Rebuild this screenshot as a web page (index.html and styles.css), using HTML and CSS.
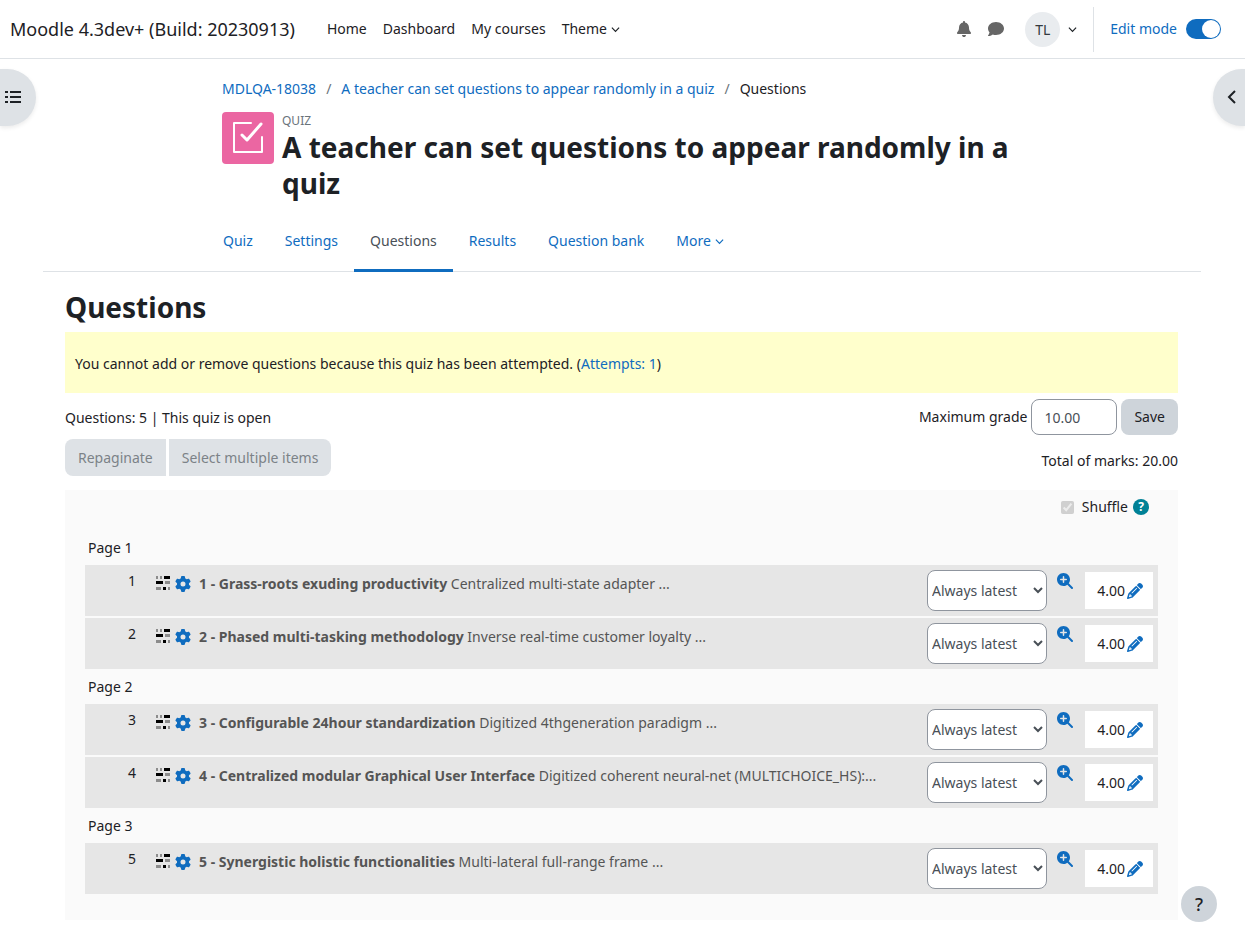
FILE: index.html
```html
<!DOCTYPE html>
<html lang="en">
<head>
    <meta charset="UTF-8">
    <meta name="viewport" content="width=device-width, initial-scale=1.0">
    <title>Questions | Moodle</title>
    <link rel="stylesheet" href="styles.css">
</head>
<body>
    <!-- Icon set -->
    <svg class="icon-set" aria-hidden="true">
        <symbol id="bell" viewBox="0 0 448 512"><path d="M224 0c-17.700 0-32 14.300-32 32l0 19.200C119 66 64 130.600 64 208l0 18.800c0 47-17.300 92.400-48.500 127.600l-7.400 8.300c-8.400 9.400-10.400 22.900-5.300 34.400S19.400 416 32 416l384 0c12.600 0 24-7.400 29.200-18.900s3.100-25-5.300-34.400l-7.400-8.300C401.300 319.200 384 273.900 384 226.800l0-18.800c0-77.400-55-142-128-156.800L256 32c0-17.700-14.300-32-32-32zm45.300 493.300c12-12 18.700-28.300 18.700-45.300l-64 0-64 0c0 17 6.700 33.300 18.700 45.300s28.300 18.700 45.300 18.700s33.300-6.700 45.300-18.700z"/></symbol>
        <symbol id="comment" viewBox="0 0 512 512"><path d="M512 240c0 114.900-114.600 208-256 208c-37.100 0-72.300-6.400-104.100-17.900c-11.900 8.700-31.300 20.600-54.300 30.600C73.600 471.100 44.700 480 16 480c-6.500 0-12.300-3.900-14.800-9.900c-2.500-6-1.100-12.800 3.400-17.400l.3-.3c.3-.3 .7-.7 1.300-1.400c1.100-1.200 2.800-3.100 4.900-5.700c4.100-5 9.600-12.400 15.200-21.600c10-16.600 19.500-38.400 21.400-62.900C17.700 326.800 0 285.100 0 240C0 125.100 114.600 32 256 32s256 93.100 256 208z"/></symbol>
        <symbol id="chevron" viewBox="0 0 10 10"><path d="M1 3l4 4 4-4" fill="none" stroke="currentColor" stroke-width="1.300"/></symbol>
        <symbol id="gear" viewBox="0 0 512 512"><path d="M495.900 166.600c3.200 8.700 .5 18.400-6.400 24.600l-43.300 39.400c1.100 8.300 1.700 16.800 1.700 25.400s-.6 17.100-1.700 25.400l43.300 39.400c6.900 6.200 9.600 15.900 6.400 24.600c-4.400 11.900-9.700 23.300-15.800 34.300l-4.700 8.100c-6.600 11-14 21.400-22.100 31.200c-5.900 7.200-15.700 9.600-24.500 6.800l-55.700-17.700c-13.400 10.300-28.200 18.900-44 25.400l-12.500 57.100c-2 9.100-9 16.300-18.200 17.800c-13.800 2.300-28 3.500-42.500 3.500s-28.700-1.200-42.500-3.500c-9.200-1.500-16.200-8.700-18.200-17.800l-12.500-57.100c-15.800-6.500-30.600-15.100-44-25.400L83.100 425.900c-8.800 2.800-18.600 .3-24.500-6.800c-8.100-9.800-15.500-20.200-22.100-31.200l-4.700-8.100c-6.100-11-11.400-22.400-15.800-34.300c-3.200-8.700-.5-18.400 6.400-24.600l43.300-39.400C64.600 273.100 64 264.600 64 256s.6-17.100 1.700-25.400L22.400 191.200c-6.900-6.200-9.600-15.900-6.400-24.600c4.400-11.900 9.700-23.300 15.800-34.300l4.700-8.100c6.600-11 14-21.400 22.100-31.200c5.900-7.200 15.700-9.600 24.500-6.800l55.700 17.700c13.400-10.300 28.200-18.900 44-25.400l12.500-57.100c2-9.100 9-16.300 18.200-17.800C227.300 1.200 241.500 0 256 0s28.700 1.200 42.500 3.500c9.200 1.500 16.200 8.700 18.200 17.800l12.500 57.100c15.800 6.500 30.600 15.100 44 25.400l55.700-17.700c8.800-2.800 18.600-.3 24.500 6.800c8.100 9.800 15.500 20.200 22.100 31.200l4.700 8.100c6.100 11 11.400 22.400 15.800 34.300zM256 336a80 80 0 1 0 0-160 80 80 0 1 0 0 160z"/></symbol>
        <symbol id="preview" viewBox="0 0 512 512"><path d="M416 208c0 45.900-14.900 88.300-40 122.700L502.600 457.400c12.500 12.500 12.500 32.800 0 45.300s-32.800 12.500-45.300 0L330.700 376c-34.400 25.200-76.800 40-122.700 40C93.100 416 0 322.900 0 208S93.100 0 208 0S416 93.100 416 208zM184 296c0 13.300 10.700 24 24 24s24-10.700 24-24l0-64 64 0c13.300 0 24-10.700 24-24s-10.700-24-24-24l-64 0 0-64c0-13.300-10.700-24-24-24s-24 10.700-24 24l0 64-64 0c-13.300 0-24 10.700-24 24s10.700 24 24 24l64 0 0 64z"/></symbol>
        <symbol id="pencil" viewBox="0 0 512 512"><path d="M410.300 231l11.300-11.300-33.900-33.900-62.100-62.100L291.700 89.800l-11.300 11.300-22.600 22.600L58.600 322.900c-10.400 10.400-18 23.300-22.200 37.400L1 480.700c-2.500 8.400-.2 17.500 6.100 23.700s15.300 8.500 23.700 6.100l120.300-35.400c14.100-4.200 27-11.800 37.400-22.200L387.700 253.700 410.300 231zM160 399.400l-9.100 22.700c-4 3.100-8.500 5.400-13.300 6.900L59.400 452l23-78.100c1.400-4.900 3.800-9.400 6.900-13.300l22.700-9.100v32c0 8.800 7.200 16 16 16h32zM362.700 18.700L348.300 33.200 325.700 55.800 314.300 67.100l33.900 33.900 62.100 62.100 33.900 33.900 11.300-11.300 22.600-22.600 14.500-14.500c25-25 25-65.500 0-90.500L453.300 18.700c-25-25-65.500-25-90.500 0zm-47.400 168l-144 144c-6.200 6.200-16.400 6.200-22.600 0s-6.200-16.400 0-22.600l144-144c6.200-6.200 16.400-6.200 22.600 0s6.200 16.400 0 22.600z"/></symbol>
        <symbol id="qtype" viewBox="0 0 14 14" shape-rendering="crispEdges">
            <path fill="#8c8c8c" d="M0 0h2v3H0zM4 0h2v3H4zM9 5h5v3H9zM0 11h5v3H0zM12 11h2v3h-2z"/>
            <path fill="#000" d="M8 0h6v3H8zM0 5h7v3H0zM7 11h3v3H7z"/>
        </symbol>
    </svg>

    <header class="navbar">
        <a class="brand" href="#">Moodle 4.3dev+ (Build: 20230913)</a>
        <nav class="primary-nav">
            <a href="#">Home</a>
            <a href="#">Dashboard</a>
            <a href="#">My courses</a>
            <a href="#">Theme <svg class="caret"><use href="#chevron"/></svg></a>
        </nav>
        <div class="user-nav">
            <button class="nav-icon" aria-label="Notifications"><svg class="icon"><use href="#bell"/></svg></button>
            <button class="nav-icon" aria-label="Messages"><svg class="icon"><use href="#comment"/></svg></button>
            <button class="user-menu"><span class="avatar">TL</span><svg class="caret"><use href="#chevron"/></svg></button>
            <div class="edit-mode">
                <label for="editmode">Edit mode</label>
                <input type="checkbox" id="editmode" class="switch" checked>
            </div>
        </div>
    </header>

    <button class="drawer drawer-left" aria-label="Open course index">
        <svg width="16" height="14" viewBox="0 0 16 14"><path d="M0 0h3v2H0zM0 5h3v2H0zM0 10h3v2H0zM5 0h11v2H5zM5 5h11v2H5zM5 10h11v2H5z"/></svg>
    </button>
    <button class="drawer drawer-right" aria-label="Open block drawer">
        <svg class="outline" width="10" height="16" viewBox="0 0 10 16" stroke="currentColor" stroke-width="2"><path d="M8 1L2 7l6 6"/></svg>
    </button>

    <main class="page">
        <div class="page-header">
            <nav class="breadcrumb">
                <a href="#">MDLQA-18038</a><span class="slash">/</span><a href="#">A teacher can set questions to appear randomly in a quiz</a><span class="slash">/</span><span>Questions</span>
            </nav>
            <div class="activity">
                <div class="activity-icon">
                    <svg class="outline" width="32" height="32" viewBox="0 0 32 32" stroke="#fff" stroke-linecap="round" stroke-linejoin="round"><path stroke-width="2" d="M19 1H2v29h28V15"/><path stroke-width="3" d="M10 13l5 5L29 2"/></svg>
                </div>
                <div>
                    <div class="activity-type">QUIZ</div>
                    <h1>A teacher can set questions to appear randomly in a quiz</h1>
                </div>
            </div>
        </div>

        <div class="tabs">
            <nav class="tabs-inner">
                <a href="#">Quiz</a>
                <a href="#">Settings</a>
                <a href="#" class="active">Questions</a>
                <a href="#">Results</a>
                <a href="#">Question bank</a>
                <a href="#">More <svg class="caret"><use href="#chevron"/></svg></a>
            </nav>
        </div>

        <div class="content">
            <h2>Questions</h2>
            <div class="status">You cannot add or remove questions because this quiz has been attempted. (<a href="#">Attempts: 1</a>)</div>

            <div class="controls">
                <div>
                    <div class="summary">Questions: 5 | This quiz is open</div>
                    <div class="btn-group">
                        <button class="btn" disabled>Repaginate</button>
                        <button class="btn" disabled>Select multiple items</button>
                    </div>
                </div>
                <form class="grading">
                    <div class="max-grade">
                        <label for="maxgrade">Maximum grade</label>
                        <input type="text" id="maxgrade" value="10.00">
                        <button type="button" class="btn save">Save</button>
                    </div>
                    <div class="total">Total of marks: 20.00</div>
                </form>
            </div>

            <div class="slots">
                <div class="shuffle">
                    <input type="checkbox" id="shuffle" checked disabled>
                    <label for="shuffle">Shuffle</label>
                    <button class="help" aria-label="Help with Shuffle">?</button>
                </div>

                <h3>Page 1</h3>
                <ul>
                    <li class="slot">
                        <span class="number">1</span>
                        <svg class="qtype"><use href="#qtype"/></svg>
                        <a class="question" href="#"><svg class="gear"><use href="#gear"/></svg><b>1 - Grass-roots exuding productivity</b> Centralized multi-state adapter ...</a>
                        <select aria-label="Question version"><option>Always latest</option></select>
                        <a class="preview" href="#" aria-label="Preview question"><svg><use href="#preview"/></svg></a>
                        <span class="mark">4.00<a href="#" aria-label="Edit maximum mark"><svg><use href="#pencil"/></svg></a></span>
                    </li>
                    <li class="slot">
                        <span class="number">2</span>
                        <svg class="qtype"><use href="#qtype"/></svg>
                        <a class="question" href="#"><svg class="gear"><use href="#gear"/></svg><b>2 - Phased multi-tasking methodology</b> Inverse real-time customer loyalty ...</a>
                        <select aria-label="Question version"><option>Always latest</option></select>
                        <a class="preview" href="#" aria-label="Preview question"><svg><use href="#preview"/></svg></a>
                        <span class="mark">4.00<a href="#" aria-label="Edit maximum mark"><svg><use href="#pencil"/></svg></a></span>
                    </li>
                </ul>

                <h3>Page 2</h3>
                <ul>
                    <li class="slot">
                        <span class="number">3</span>
                        <svg class="qtype"><use href="#qtype"/></svg>
                        <a class="question" href="#"><svg class="gear"><use href="#gear"/></svg><b>3 - Configurable 24hour standardization</b> Digitized 4thgeneration paradigm ...</a>
                        <select aria-label="Question version"><option>Always latest</option></select>
                        <a class="preview" href="#" aria-label="Preview question"><svg><use href="#preview"/></svg></a>
                        <span class="mark">4.00<a href="#" aria-label="Edit maximum mark"><svg><use href="#pencil"/></svg></a></span>
                    </li>
                    <li class="slot">
                        <span class="number">4</span>
                        <svg class="qtype"><use href="#qtype"/></svg>
                        <a class="question" href="#"><svg class="gear"><use href="#gear"/></svg><b>4 - Centralized modular Graphical User Interface</b> Digitized coherent neural-net (MULTICHOICE_HS):...</a>
                        <select aria-label="Question version"><option>Always latest</option></select>
                        <a class="preview" href="#" aria-label="Preview question"><svg><use href="#preview"/></svg></a>
                        <span class="mark">4.00<a href="#" aria-label="Edit maximum mark"><svg><use href="#pencil"/></svg></a></span>
                    </li>
                </ul>

                <h3>Page 3</h3>
                <ul>
                    <li class="slot">
                        <span class="number">5</span>
                        <svg class="qtype"><use href="#qtype"/></svg>
                        <a class="question" href="#"><svg class="gear"><use href="#gear"/></svg><b>5 - Synergistic holistic functionalities</b> Multi-lateral full-range frame ...</a>
                        <select aria-label="Question version"><option>Always latest</option></select>
                        <a class="preview" href="#" aria-label="Preview question"><svg><use href="#preview"/></svg></a>
                        <span class="mark">4.00<a href="#" aria-label="Edit maximum mark"><svg><use href="#pencil"/></svg></a></span>
                    </li>
                </ul>
            </div>
        </div>
    </main>

    <button class="footer-help" aria-label="Show footer">?</button>
</body>
</html>
```
FILE: styles.css
```css
* {
    box-sizing: border-box;
}
body {
    margin: 0;
    font-family: "Noto Sans", "Open Sans", sans-serif;
    font-size: 14px;
    line-height: 22px;
    color: #1d2125;
    background: #fff;
}
a {
    color: #0f6cbf;
    text-decoration: none;
}
button, input, select {
    font: inherit;
    color: inherit;
}
button {
    border: 0;
    cursor: pointer;
}
svg {
    fill: currentColor;
}
.outline {
    fill: none;
}
.icon-set {
    display: none;
}
.caret {
    width: 9px;
    height: 9px;
}

/* Top bar */
.navbar {
    display: flex;
    align-items: center;
    height: 59px;
    padding: 0 24px 0 10px;
    border-bottom: 1px solid #dee2e6;
}
.navbar a {
    color: #1d2125;
}
.navbar .brand {
    font-size: 18px;
    margin-right: 32px;
}
.primary-nav {
    display: flex;
    gap: 16px;
}
.user-nav {
    display: flex;
    align-items: center;
    margin-left: auto;
}
.nav-icon {
    display: flex;
    width: 32px;
    padding: 0 8px;
    background: none;
    color: #666;
}
.icon {
    width: 16px;
    height: 16px;
}
.user-menu {
    display: flex;
    align-items: center;
    gap: 8px;
    margin-left: 13px;
    padding: 0;
    background: none;
}
.avatar {
    width: 35px;
    line-height: 35px;
    border-radius: 50%;
    background: #e9ecef;
    color: #343a40;
}
.edit-mode {
    display: flex;
    align-items: center;
    gap: 9px;
    height: 45px;
    margin-left: 16px;
    padding-left: 16px;
    border-left: 1px solid #dee2e6;
    color: #0f6cbf;
}
.switch {
    appearance: none;
    width: 35px;
    height: 20px;
    margin: 0;
    padding: 1px;
    border-radius: 10px;
    background: #0f6cbf;
}
.switch::before {
    content: "";
    display: block;
    width: 18px;
    height: 18px;
    margin-left: auto;
    border-radius: 50%;
    background: #fff;
}

/* Drawer toggles */
.drawer {
    position: fixed;
    top: 69px;
    display: flex;
    align-items: center;
    width: 36px;
    height: 57px;
    background: #dee2e6;
    box-shadow: 0 2px 4px rgba(0, 0, 0, 0.08);
}
.drawer-left {
    left: 0;
    padding: 0 5px;
    border-radius: 0 29px 29px 0;
}
.drawer-right {
    right: 0;
    width: 32px;
    padding: 0 8px 0 14px;
    border-radius: 29px 0 0 29px;
}

/* Page header */
.page {
    margin: 0 44px 0 43px;
    padding-bottom: 15px;
}
.page-header, .tabs-inner {
    max-width: 800px;
    margin: 0 auto;
}
.page-header {
    padding-top: 19px;
}
.slash {
    padding: 0 10px;
    color: #6a737b;
}
.activity {
    display: flex;
    gap: 8px;
    margin-top: 12px;
}
.activity-icon {
    display: flex;
    flex: none;
    align-items: center;
    justify-content: center;
    width: 52px;
    height: 52px;
    border-radius: 4px;
    background: #eb66a2;
}
.activity-type {
    font-size: 12px;
    line-height: 17px;
    color: #6a737b;
}
h1, h2 {
    margin: 0;
    font-size: 28px;
    line-height: 36px;
}

/* Tabs */
.tabs {
    margin-top: 9px;
    border-bottom: 1px solid #dee2e6;
}
.tabs-inner {
    display: flex;
}
.tabs a {
    height: 62px;
    margin-bottom: -1px;
    padding: 0 16px;
    line-height: 62px;
}
.tabs a:first-child {
    padding-left: 1px;
}
.tabs .active {
    border-bottom: 3px solid #0f6cbf;
    color: #495057;
}

/* Quiz controls */
.content {
    padding: 17px 23px 0 22px;
}
.status {
    margin-top: 7px;
    padding: 21px 10px 18px;
    background: #ffc;
}
.controls {
    display: flex;
    justify-content: space-between;
    margin-top: 6px;
}
.summary {
    margin: 8px 0 10px;
}
.btn-group {
    display: flex;
    gap: 3px;
}
.btn {
    height: 36px;
    padding: 0 13px;
    background: #ced4da;
}
.btn:disabled {
    height: 37px;
    background: #dee2e6;
    color: #7c8288;
}
.btn:first-child {
    border-radius: 8px 0 0 8px;
}
.btn:last-child {
    border-radius: 0 8px 8px 0;
}
.btn.save {
    border-radius: 8px;
}
.max-grade {
    display: flex;
    align-items: center;
    gap: 4px;
}
.max-grade input {
    width: 86px;
    height: 36px;
    padding: 0 12px;
    border: 1px solid #8f959e;
    border-radius: 8px;
    color: #495057;
}
.total {
    margin-top: 15px;
    text-align: right;
}

/* Question list */
.slots {
    margin-top: 14px;
    padding: 6px 20px 26px;
    background: #fafafa;
}
.shuffle {
    display: flex;
    align-items: center;
    justify-content: flex-end;
    margin-right: 9px;
}
.shuffle input {
    margin: 0 8px 0 0;
}
.help {
    width: 16px;
    height: 16px;
    margin-left: 5px;
    padding: 0;
    border-radius: 50%;
    background: #008196;
    color: #fff;
    font-size: 12px;
    font-weight: bold;
    line-height: 16px;
}
h3 {
    margin: 0;
    padding-left: 3px;
    font-size: 14px;
    font-weight: normal;
    line-height: 35px;
}
.shuffle + h3 {
    margin-top: 12px;
}
ul {
    display: grid;
    gap: 2px;
    margin: 0;
    padding: 0;
    list-style: none;
}
.slot {
    display: flex;
    align-items: flex-start;
    height: 51px;
    padding: 5px 5px 5px 0;
    background: #e6e6e6;
}
.number {
    width: 51px;
    text-align: right;
}
.qtype {
    flex: none;
    width: 14px;
    height: 14px;
    margin: 6px 5px 0 20px;
}
.question {
    flex: 1;
    min-width: 0;
    padding-top: 3px;
    overflow: hidden;
    white-space: nowrap;
    color: #555;
}
.gear {
    width: 16px;
    height: 16px;
    margin-right: 8px;
    vertical-align: -3px;
    color: #0f6cbf;
}
.slot select {
    width: 120px;
    height: 41px;
    border: 1px solid #8f959e;
    border-radius: 8px;
    background: #fff;
    color: #495057;
}
.preview {
    margin: 3px 12px 0 10px;
}
.preview svg, .mark svg {
    display: block;
    width: 16px;
    height: 16px;
}
.mark {
    display: flex;
    align-items: center;
    justify-content: flex-end;
    gap: 2px;
    width: 68px;
    height: 37px;
    margin-top: 2px;
    padding-right: 10px;
    background: #fff;
}

.footer-help {
    position: fixed;
    right: 28px;
    bottom: 12px;
    width: 36px;
    height: 36px;
    padding: 0;
    border-radius: 50%;
    background: #ced4da;
    font-size: 18px;
    font-weight: 500;
}
```
